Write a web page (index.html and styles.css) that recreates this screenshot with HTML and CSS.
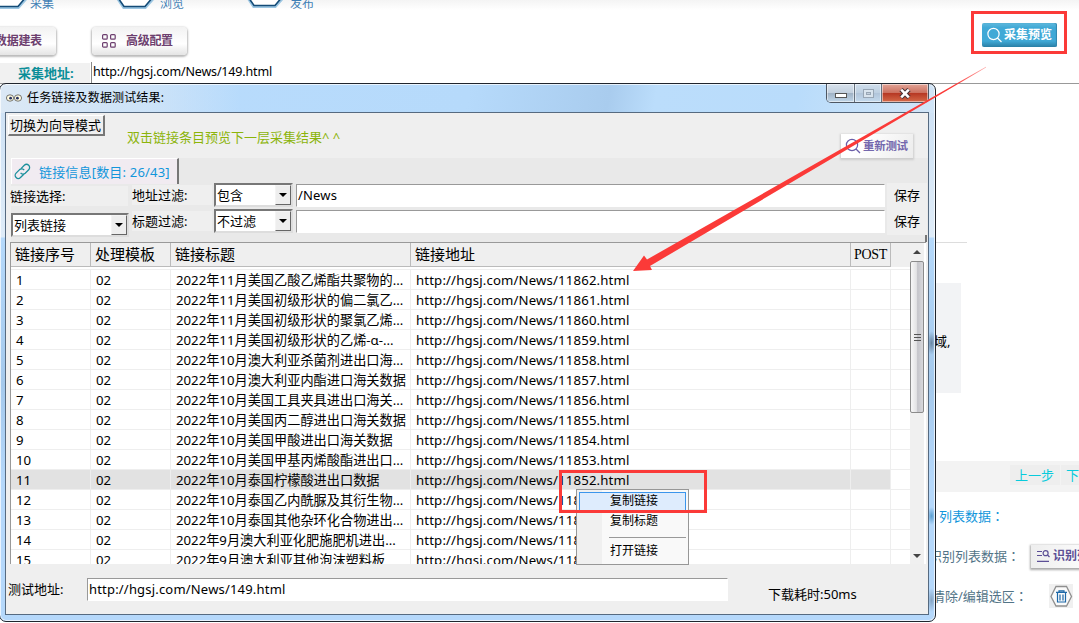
FILE: index.html
```
<!DOCTYPE html>
<html lang="zh-CN">
<head>
    <meta charset="UTF-8">
    <title>任务链接及数据测试结果</title>
    <link rel="stylesheet" href="styles.css">
</head>
<body>

<div class="app">
    <div class="steps">
        <div class="step"><svg width="70" height="10"><path class="hex-glow" d="M-4 -8 L6 7 H30 L38 -2"/><path class="hex" d="M-4 -8 L6 6.500 H30 L38 -3"/></svg><span>采集</span></div>
        <div class="step"><svg width="70" height="10"><path class="hex-glow" d="M-6 -8 L4 7 H25 L33 -2"/><path class="hex" d="M-6 -8 L4 6.500 H25 L33 -3"/></svg><span>浏览</span></div>
        <div class="step"><svg width="70" height="10"><path class="hex-glow" d="M-6 -9 L4 6 H25 L33 -3"/><path class="hex" d="M-6 -9 L4 5.500 H25 L33 -4"/></svg><span>发布</span></div>
    </div>

    <div class="toolbar">
        <div class="tool-btn first">数据建表</div>
        <div class="tool-btn">
            <svg width="16" height="16" fill="none" stroke="#6d3f6f" stroke-width="1.2"><rect x="1.6" y="1.6" width="4.6" height="4.6" rx="1"/><rect x="9.6" y="1.6" width="4.6" height="4.6" rx="1"/><rect x="1.6" y="9.6" width="4.6" height="4.6" rx="1"/><rect x="9.6" y="9.6" width="4.6" height="4.6" rx="1"/></svg>
            高级配置
        </div>
        <div class="preview-frame">
            <div class="preview-btn">
                <svg width="16" height="16" fill="none" stroke="#fff" stroke-width="1.2"><circle cx="6.500" cy="7" r="5.6"/><path d="M10.500 11l4 4"/></svg>
                采集预览
            </div>
        </div>
    </div>

    <div class="address">
        <div class="address-label">采集地址:</div>
        <div class="address-value">http://hgsj.com/News/149.html</div>
    </div>

    <div class="side">
        <div class="side-line"></div>
        <div class="side-box">域,</div>
        <div class="side-nav"><span>上一步</span><span>下一步</span></div>
        <div class="side-row blue">列表数据<em>：</em></div>
        <div class="side-row identify">识别列表数据<em>：</em>
            <div class="identify-btn">
                <svg width="14" height="14" fill="none" stroke="#5c4f96" stroke-width="1.2"><path d="M1 2.5h5M1 6.5h5M1 12.4h12"/><circle cx="9.6" cy="4.2" r="2.5"/><path d="M11.5 6l2 2"/></svg>
                <span>识别列表</span>
            </div>
        </div>
        <div class="side-row clear">清除/编辑选区<em>：</em>
            <svg width="24" height="24"><rect width="24" height="24" fill="#f0f0f0"/><path d="M7 2.5h10.5l5 10-5 9.5H7l-5-9.5z" fill="#fafafa" stroke="#8f8f8f" stroke-width="1.3"/><path d="M7 8.3h11M10 8V6.8h5V8M8.5 8.5v9.5h8v-9.5M11 10.5v6M14 10.5v6" fill="none" stroke="#1d68a8" stroke-width="1.2"/></svg>
        </div>
    </div>
</div>

<div class="window">
    <div class="titlebar">
        <svg class="eyes" width="16" height="10"><ellipse cx="4" cy="5" rx="3.6" ry="3.2" fill="#fffbe0" stroke="#555" stroke-width="0.8"/><ellipse cx="12" cy="5" rx="3.6" ry="3.2" fill="#fffbe0" stroke="#555" stroke-width="0.8"/><circle cx="4.6" cy="5.2" r="1.400" fill="#253060"/><circle cx="11.4" cy="5.2" r="1.400" fill="#253060"/></svg>
        <span class="title">任务链接及数据测试结果:</span>
        <div class="win-btns">
            <div class="win-btn min"><i></i></div>
            <div class="win-btn max"><i></i></div>
            <div class="win-btn close">
                <svg width="14" height="11"><path d="M3 1.5l8 8M11 1.5l-8 8" stroke="#4b3438" stroke-width="4.6"/><path d="M3.2 1.7l7.6 7.6M10.8 1.7l-7.6 7.6" stroke="#fff" stroke-width="2.6"/></svg>
            </div>
        </div>
    </div>

    <div class="client">
        <div class="head">
            <div class="mode-btn">切换为向导模式</div>
            <div class="hint">双击链接条目预览下一层采集结果^ ^</div>
            <div class="retest-btn">
                <svg width="16" height="16" fill="none" stroke="#6a5da8" stroke-width="1.2"><circle cx="7" cy="7" r="5.6"/><path d="M11 11l4 4"/></svg>
                重新测试
            </div>
        </div>

        <div class="panel">
            <div class="tab">
                <svg width="17" height="17" fill="none" stroke="#1a8f9c" stroke-width="1.3"><path d="M7 5.6l3.3-3.3a3.1 3.1 0 0 1 4.4 4.4l-3.5 3.5a3.1 3.1 0 0 1-4.6-.4"/><path d="M9.8 11.2l-3.3 3.3a3.1 3.1 0 0 1-4.4-4.4l3.5-3.5a3.1 3.1 0 0 1 4.6.5"/></svg>
                <span>链接信息[数目: 26/43]</span>
            </div>
            <div class="filters">
                <div class="col-select">
                    <div class="label">链接选择:</div>
                    <div class="combo"><span>列表链接</span><b></b></div>
                </div>
                <div class="col-label">
                    <div class="label">地址过滤:</div>
                    <div class="label">标题过滤:</div>
                </div>
                <div class="col-combo">
                    <div class="combo"><span>包含</span><b></b></div>
                    <div class="combo"><span>不过滤</span><b></b></div>
                </div>
                <div class="col-input">
                    <div class="input">/News</div>
                    <div class="input"></div>
                </div>
                <div class="col-save">
                    <div>保存</div>
                    <div>保存</div>
                </div>
            </div>
            <div class="panel-edge"></div>
        </div>

        <div class="list">
            <div class="grid">
                <div class="row header">
                    <div>链接序号</div><div>处理模板</div><div>链接标题</div><div>链接地址</div><div>POST</div><div></div>
                </div>
                <div id="rows"></div>
            </div>
            <div class="scrollbar">
                <div class="arrow up"></div>
                <div class="thumb"><i></i><i></i><i></i></div>
                <div class="arrow down"></div>
            </div>
        </div>

        <div class="footer">
            <div class="footer-label">测试地址:</div>
            <div class="input">http://hgsj.com/News/149.html</div>
            <div class="cost">下载耗时:50ms</div>
        </div>
    </div>
</div>

<div class="menu">
    <div class="menu-item active">复制链接</div>
    <div class="menu-item">复制标题</div>
    <div class="menu-line"></div>
    <div class="menu-item">打开链接</div>
</div>
<div class="menu-frame"></div>

<svg class="pointer" width="360" height="212">
    <defs>
        <linearGradient id="fade" gradientUnits="userSpaceOnUse" x1="356" y1="0" x2="325" y2="18">
            <stop offset="0" stop-color="#fb3a38" stop-opacity="0.4"/>
            <stop offset="1" stop-color="#fb3a38"/>
        </linearGradient>
    </defs>
    <path fill="url(#fade)" d="M356 1.700 L17 194.5 L14 190.500 L3 206 L22 205 L20 201 L356 2.500 Z"/>
</svg>

<script>
    const titles = [
        '2022年11月美国乙酸乙烯酯共聚物的...',
        '2022年11月美国初级形状的偏二氯乙...',
        '2022年11月美国初级形状的聚氯乙烯...',
        '2022年11月美国初级形状的乙烯-α-...',
        '2022年10月澳大利亚杀菌剂进出口海...',
        '2022年10月澳大利亚内酯进口海关数据',
        '2022年10月美国工具夹具进出口海关...',
        '2022年10月美国丙二醇进出口海关数据',
        '2022年10月美国甲酸进出口海关数据',
        '2022年10月美国甲基丙烯酸酯进出口...',
        '2022年10月泰国柠檬酸进出口数据',
        '2022年10月泰国乙内酰脲及其衍生物...',
        '2022年10月泰国其他杂环化合物进出...',
        '2022年9月澳大利亚化肥施肥机进出...',
        '2022年9月澳大利亚其他泡沫塑料板'
    ];

    const rows = document.getElementById('rows');

    titles.forEach((title, i) => {
        const row = document.createElement('div');
        row.className = i === 10 ? 'row selected' : 'row';
        row.innerHTML = `
            <div>${i + 1}</div>
            <div>02</div>
            <div>${title}</div>
            <div class="url">http://hgsj.com/News/${11862 - i}.html</div>
            <div></div>
            <div></div>
        `;
        rows.appendChild(row);
    });
</script>

</body>
</html>
```
FILE: styles.css
```
* {
    box-sizing: border-box;
}
body {
    margin: 0;
    width: 1079px;
    height: 623px;
    overflow: hidden;
    position: relative;
    background-color: #fff;
    color: #000;
    font-family: "Noto Sans", "Noto Sans CJK SC", sans-serif;
    font-size: 13px;
    line-height: 20px;
    white-space: nowrap;
}

/* page behind the window */
.app {
    height: 623px;
    overflow: hidden;
}
.steps {
    display: flex;
    height: 26px;
    padding-left: 0;
    background: linear-gradient(#f4f4f4, #fff 10px);
}
.step {
    display: flex;
    width: 130px;
    color: #3f7fb5;
    font-size: 12px;
    line-height: 7px;
}
.step:first-child {
    margin-left: -12px;
    width: 132px;
}
.step svg {
    width: 42px;
    overflow: visible;
    flex: none;
}
.step:nth-child(n+2) svg {
    width: 40px;
}
.hex {
    fill: #fff;
    stroke: #134b77;
    stroke-width: 1.6;
}
.hex-glow {
    fill: none;
    stroke: #9cc6e2;
    stroke-width: 4;
}
.toolbar {
    display: flex;
    height: 36px;
}
.tool-btn {
    display: flex;
    align-items: center;
    gap: 9px;
    width: 95px;
    height: 28px;
    margin-top: 1px;
    padding-left: 9px;
    border-radius: 4px;
    background: linear-gradient(#f2f2f2, #fff 60%, #e4e4e4);
    box-shadow: 0 1px 2px 1px #bbb;
    color: #6d3f6f;
    font-size: 12px;
    font-weight: bold;
    letter-spacing: -0.3px;
}
.tool-btn.first {
    margin-left: -39px;
    margin-right: 36px;
    padding-left: 34px;
}
.preview-frame {
    width: 96px;
    height: 43px;
    margin: -15px 12px 0 auto;
    padding: 9px 0 0 8px;
    border: 3px solid #fb3a38;
}
.preview-btn {
    display: flex;
    align-items: center;
    gap: 1px;
    width: 75px;
    height: 24px;
    padding-left: 5px;
    border-radius: 2px;
    background: linear-gradient(#5fb9dc, #40a9d6 20%, #40a9d6 75%, #2b7fa5);
    box-shadow: inset -1px 0 1px #3186ac;
    color: #fff;
    font-size: 12px;
    font-weight: bold;
}
.address {
    display: flex;
    height: 22px;
    border-bottom: 1px solid #999;
}
.address-label {
    width: 90px;
    margin-top: 1px;
    padding-left: 18px;
    background-color: #f1f1f1;
    color: #0a8e98;
    font-weight: bold;
    line-height: 20px;
}
.address-value {
    margin-left: 1px;
    padding-left: 1px;
    border-left: 1px solid #888;
    line-height: 19px;
    font-size: 12.5px;
    letter-spacing: -0.16px;
}
.side {
    margin-left: 936px;
}
.side-line {
    width: 31px;
    height: 1px;
    margin-top: 158px;
    background-color: #ddd;
}
.side-box {
    width: 25px;
    height: 110px;
    margin-top: 40px;
    padding-top: 48px;
    background-color: #f2f3f5;
    text-indent: -2px;
}
.side-nav {
    display: flex;
    gap: 1px;
    height: 31px;
    margin-top: 68px;
    padding: 4px 0 0 74px;
    background-color: #f3f3f3;
    color: #08cbdc;
}
.side-nav span {
    height: 20px;
    padding: 0 6px 0 5px;
    background-color: #eee;
}
.side-row {
    display: flex;
    align-items: center;
    height: 40px;
    color: #527487;
}
.side-row em {
    font-family: "Noto Sans CJK TC", sans-serif;
    font-style: normal;
}
.side-row.blue {
    margin-top: 4px;
    padding-left: 3px;
    color: #1296db;
}
.side-row.identify {
    margin-left: -7px;
}
.identify-btn {
    display: flex;
    align-items: center;
    gap: 3px;
    width: 80px;
    height: 23px;
    margin-left: 11px;
    padding-left: 5px;
    background: linear-gradient(90deg, #eee, #fff);
    box-shadow: 0 1px 2px 1px #aaa;
    color: #5c4f96;
    font-size: 12px;
    font-weight: bold;
}
.side-row.clear {
    margin-left: -4px;
}
.side-row.clear svg {
    margin-left: 21px;
}

/* test result window */
.window {
    position: absolute;
    left: -1px;
    top: 83px;
    width: 937px;
    height: 539px;
    padding: 0 6px;
    border: 1px solid #20252d;
    border-radius: 7px;
    background:
        radial-gradient(closest-side, rgba(60, 85, 110, 0.6), transparent) 927px 247px / 9px 24px no-repeat,
        radial-gradient(closest-side, rgba(30, 120, 180, 0.6), transparent) 927px 423px / 9px 18px no-repeat,
        radial-gradient(closest-side, rgba(60, 85, 110, 0.4), transparent) 927px 504px / 9px 24px no-repeat,
        linear-gradient(90deg, #dbe8f5 0, rgba(219, 232, 245, 0.6) 150px, transparent 240px) top / 100% 29px no-repeat,
        linear-gradient(100deg, #b9dcfd 0, #b6dafb 50%, #a9ccee 65%, #bbddfb 70%, #b9dcfb 85%, #d2e5f7 100%) top / 100% 29px no-repeat,
        linear-gradient(#cfe2f5 28px, #dfecf8 153px, #b5d9fb 154px, #a5c9ec 300px, #b5d8fb 400px);
    box-shadow: inset 0 0 0 1px rgba(255, 255, 255, 0.7);
}
.titlebar {
    display: flex;
    height: 28px;
}
.eyes {
    margin-top: 9px;
}
.title {
    margin-left: 5px;
    font-size: 12px;
    line-height: 28px;
    letter-spacing: 0.15px;
}
.win-btns {
    display: flex;
    width: 103px;
    height: 19px;
    margin-left: auto;
    border: 1px solid #4e5763;
    border-top: none;
    border-radius: 0 0 5px 5px;
    overflow: hidden;
}
.win-btn {
    display: flex;
    align-items: center;
    justify-content: center;
    width: 28px;
    border-right: 1px solid #66727f;
    background: linear-gradient(#d7e2ed, #c3d0de 48%, #9fb1c4 50%, #c0d6e9);
    box-shadow: inset 0 0 0 1px rgba(255, 255, 255, 0.5);
}
.win-btn.max {
    width: 27px;
    background: linear-gradient(#cfdeec, #bdcfe1 50%, #b1c5da 52%, #c4daee);
}
.win-btn.close {
    flex: 1;
    border: none;
    background: linear-gradient(#e2a497, #cc7160 48%, #b53622 50%, #d56a49);
}
.min i {
    width: 12px;
    height: 5px;
    margin-top: 5px;
    border: 1px solid #555;
    background-color: #fff;
}
.max i {
    width: 11px;
    height: 9px;
    border: 1px solid #98a6b5;
    background-color: #c3d0de;
    box-shadow: inset 0 0 0 2px #d9e4ee, inset 0 0 0 3px #98a6b5;
}
.client {
    width: 924px;
    height: 503px;
    margin-left: -1px;
    border: 1px solid #566a80;
    background-color: #efefef;
}
.head {
    display: flex;
    height: 45px;
}
.mode-btn {
    width: 97px;
    height: 21px;
    margin: 2px 0 0 2px;
    border: 1px solid #fff;
    border-right: 2px solid #777;
    border-bottom: 2px solid #777;
    line-height: 18px;
    text-indent: 1px;
}
.hint {
    margin: 14px 0 0 22px;
    color: #8cb40a;
}
.retest-btn {
    display: flex;
    align-items: center;
    gap: 2px;
    width: 72px;
    height: 24px;
    margin: 21px 15px 0 auto;
    padding-left: 4px;
    background: linear-gradient(120deg, #fff 30%, #ececec);
    box-shadow: 0 1px 2px 1px #ccc;
    color: #7468ad;
    font-size: 11.5px;
    font-weight: bold;
    letter-spacing: -0.3px;
    z-index: 1;
}
.panel {
    height: 84px;
    margin-left: 5px;
    background-color: #e9e9e9;
}
.panel-edge {
    width: 2px;
    height: 7px;
    margin: 0 1px 0 auto;
    background-color: #777;
}
.tab {
    display: flex;
    align-items: center;
    width: 168px;
    height: 26px;
    padding-left: 2px;
    border: 1px solid #fff;
    border-width: 1px 0 0 1px;
    border-right: 2px solid #777;
    background-color: #f1ebf1;
    color: #1296db;
}
.tab span {
    margin-left: 8px;
    letter-spacing: 0.18px;
}
.filters {
    display: flex;
    height: 51px;
}
.label {
    height: 20px;
    background-color: #efefef;
}
.combo {
    display: flex;
    height: 24px;
    border: 2px solid #777;
    border-right-color: #ddd;
    border-bottom-color: #ddd;
    background-color: #fff;
    line-height: 21px;
}
.combo span {
    flex: 1;
    padding-left: 1px;
}
.combo b {
    width: 16px;
    border: 1px solid #f4f4f4;
    border-right: 1px solid #666;
    border-bottom: 1px solid #666;
    background-color: #eee;
}
.combo b::after {
    content: "";
    display: block;
    margin: 7px 0 0 3px;
    width: 0;
    border: 4px solid transparent;
    border-top-color: #000;
    border-bottom: none;
}
.col-select {
    width: 118px;
    margin: 2px 0 0 -1px;
}
.col-select .combo {
    margin: 7px -1px 0 1px;
}
.col-label {
    width: 80px;
    margin: 1px 2px 0 4px;
}
.col-label .label + .label {
    margin-top: 6px;
}
.col-combo {
    width: 79px;
    margin-top: -1px;
}
.col-combo .combo + .combo {
    margin-top: 2px;
}
.input {
    height: 23px;
    padding-left: 1px;
    border: 1px solid #999;
    border-right-color: #fff;
    border-bottom-color: #fff;
    background-color: #fff;
    letter-spacing: 0.19px;
}
.col-input {
    width: 589px;
    margin: 0 0 0 3px;
}
.col-input .input + .input {
    margin-top: 3px;
}
.col-save {
    width: 40px;
    margin: -1px 0 0 2px;
    padding: 2px 0 0 7px;
    background-color: #efefef;
}
.col-save div {
    height: 26px;
}

/* link list */
.list {
    display: flex;
    width: 916px;
    height: 322px;
    margin-left: 4px;
    border: 1px solid #999;
    border-width: 1px 0 0 1px;
    background-color: #fff;
}
.grid {
    width: 899px;
    height: 321px;
    overflow: hidden;
}
.row {
    display: grid;
    grid-template-columns: 80px 80px 240px 440px 40px 1fr;
    height: 20px;
    font-size: 13.2px;
}
.row > div {
    padding-left: 5px;
    border-right: 1px solid #eee;
    border-bottom: 1px solid #eee;
    overflow: hidden;
}
.row > div:last-child {
    border-right: none;
}
.row .url {
    letter-spacing: 0.15px;
}
.row.header {
    height: 27px;
    background: linear-gradient(#efefef 24px, #fff 24px, #fff 26px, #eee 26px);
    font-family: "Liberation Serif", "Noto Sans CJK SC", serif;
    font-size: 15px;
    line-height: 24px;
}
.header > div {
    height: 24px;
    padding-left: 4px;
    border-color: #bbb;
}
.header > div:nth-child(5) {
    padding-left: 3px;
    font-size: 14px;
    letter-spacing: -0.3px;
}
.header > div:last-child {
    border-bottom: none;
}
.selected > div:not(:last-child) {
    background-color: #e2e2e2;
}
.scrollbar {
    display: flex;
    flex-direction: column;
    align-items: center;
    width: 14px;
    background-color: #f0f0f0;
}
.arrow {
    margin: 7px 0;
    border: 4px solid transparent;
}
.arrow.up {
    border-top: none;
    border-bottom-color: #444;
}
.arrow.down {
    margin: auto 0 6px;
    border-bottom: none;
    border-top-color: #444;
}
.thumb {
    display: flex;
    flex-direction: column;
    align-items: center;
    justify-content: center;
    gap: 2px;
    width: 14px;
    height: 152px;
    border: 1px solid #8b8b8b;
    border-radius: 2px;
    background: linear-gradient(90deg, #f7f7f7, #e3e3e5 45%, #c5c5ca 55%, #d8d8dc);
}
.thumb i {
    width: 7px;
    height: 1px;
    background-color: #555;
}
.footer {
    display: flex;
    padding: 14px 0 0 2px;
}
.footer-label {
    width: 79px;
    padding-top: 1px;
}
.footer .input {
    width: 641px;
}
.cost {
    margin: 6px 0 0 40px;
}

/* context menu */
.menu {
    position: absolute;
    left: 576px;
    top: 489px;
    width: 113px;
    height: 76px;
    padding: 2px 2px;
    border: 1px solid #979797;
    background: linear-gradient(90deg, #f0f0f0 25px, #f9f9f9 25px);
    font-size: 12px;
}
.menu-item {
    height: 20px;
    padding-left: 30px;
    border: 1px solid transparent;
    line-height: 16px;
}
.menu-item.active {
    border-color: #3b95ec;
    background-color: #deecfd;
}
.menu-line {
    height: 1px;
    margin: 5px 0 4px 30px;
    background-color: #999;
}
.menu-frame {
    position: absolute;
    left: 559px;
    top: 470px;
    width: 148px;
    height: 43px;
    border: 3px solid #fb3a38;
}
.pointer {
    position: absolute;
    left: 630px;
    top: 65px;
    z-index: 2;
}
```
